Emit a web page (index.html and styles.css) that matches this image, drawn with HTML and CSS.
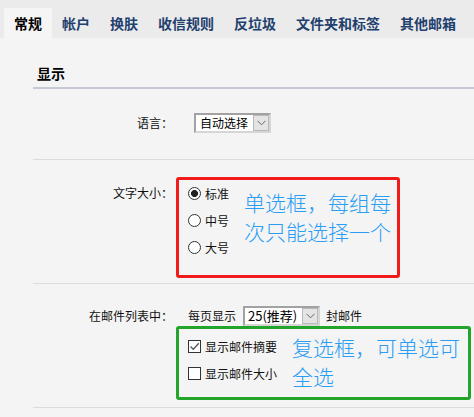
FILE: index.html
```html
<!DOCTYPE html>
<html lang="zh-CN">
<head>
<meta charset="utf-8">
<title>设置</title>
<link rel="stylesheet" href="styles.css">
</head>
<body>
<div class="tabs">
  <span class="tab active">常规</span>
  <span class="tab">帐户</span>
  <span class="tab">换肤</span>
  <span class="tab">收信规则</span>
  <span class="tab">反垃圾</span>
  <span class="tab">文件夹和标签</span>
  <span class="tab">其他邮箱</span>
</div>
<div class="content">
  <div class="section-title">显示</div>

  <div class="row row-lang">
    <div class="label">语言：</div>
    <div class="ctrl">
      <span class="select sel-lang">
        <span class="sel-text">自动选择</span>
        <span class="sel-arrow"><svg width="9" height="6" viewBox="0 0 9 6"><path d="M0.5 0.8 L4.5 4.8 L8.5 0.8" fill="none" stroke="#666" stroke-width="1"/></svg></span>
      </span>
    </div>
  </div>

  <div class="row row-size">
    <div class="label">文字大小：</div>
    <div class="ctrl">
      <div class="note-box red">
        <div class="options">
          <label class="opt"><input class="radio" type="radio" name="size" checked>标准</label>
          <label class="opt"><input class="radio" type="radio" name="size">中号</label>
          <label class="opt"><input class="radio" type="radio" name="size">大号</label>
        </div>
        <div class="note">单选框，每组每<br>次只能选择一个</div>
      </div>
    </div>
  </div>

  <div class="row row-list">
    <div class="label">在邮件列表中：</div>
    <div class="ctrl">
      <div class="per-page">
        <span>每页显示</span>
        <span class="select sel-count">
          <span class="sel-text">25(推荐)</span>
          <span class="sel-arrow"><svg width="9" height="6" viewBox="0 0 9 6"><path d="M0.5 0.8 L4.5 4.8 L8.5 0.8" fill="none" stroke="#666" stroke-width="1"/></svg></span>
        </span>
        <span>封邮件</span>
      </div>
      <div class="note-box green">
        <div class="options opts-check">
          <label class="opt"><span class="check on"><svg width="11" height="11" viewBox="0 0 11 11"><path d="M1.5 5.5 L4.3 8.3 L9.8 2.3" fill="none" stroke="#555" stroke-width="1.3"/></svg></span>显示邮件摘要</label>
          <label class="opt"><span class="check"></span>显示邮件大小</label>
        </div>
        <div class="note note-green">复选框，可单选可<br>全选</div>
      </div>
    </div>
  </div>
</div>
</body>
</html>
```
FILE: styles.css
```css
* { box-sizing: border-box; }

body {
  margin: 0;
  background: #f4f4f4;
  font-family: "Noto Sans CJK SC", "Noto Sans", sans-serif;
  font-size: 12px;
  color: #111;
}

.tabs {
  height: 38px;
  background: #ebebeb;
  display: flex;
  align-items: flex-end;
  padding-left: 4px;
}

.tab {
  height: 30px;
  line-height: 30px;
  padding: 0 10px;
  font-size: 14px;
  font-weight: bold;
  color: #223f6e;
  white-space: nowrap;
}

.tab.active {
  background: #f5f5f5;
  color: #000;
}

.content {
  padding-left: 33px;
}

.section-title {
  padding: 25px 0 4px 4px;
  line-height: 20px;
  font-size: 14px;
  font-weight: bold;
  color: #000;
  border-bottom: 2px solid #c6cad4;
}

.row {
  display: grid;
  grid-template-columns: 143px 1fr;
  border-bottom: 1px solid #dcdcdc;
}

.label {
  text-align: right;
  padding-right: 3px;
  line-height: 20px;
  white-space: nowrap;
  color: #111;
}

.row-lang { padding: 24px 0 26px; }
.row-size { padding: 17px 0 5px; }
.row-size .label { margin-top: 6px; }
.row-list { padding: 21px 0 7px; }
.row-list .label { margin-top: 1px; }

.select {
  display: inline-flex;
  align-items: center;
  height: 20px;
  background: #fff;
  border-style: solid;
  border-width: 2px;
  border-color: #a2a2a2 #d6d6d6 #d6d6d6 #a2a2a2;
}

.sel-text {
  line-height: 16px;
  white-space: nowrap;
  color: #000;
}

.sel-arrow {
  margin-left: auto;
  width: 16px;
  height: 16px;
  background: #e4e4e4;
  border: 1px solid #b9b9b9;
  display: flex;
  align-items: center;
  justify-content: center;
}

.sel-lang {
  width: 77px;
  margin-left: 18px;
}
.sel-lang .sel-text { padding-left: 4px; }

.sel-count {
  width: 77px;
  margin: 0 6px 0 7px;
}
.sel-count .sel-text { padding-left: 3px; font-size: 13px; }

.note-box {
  display: flex;
  align-items: flex-start;
  border: 3px solid;
  border-radius: 3px;
  padding-left: 9px;
}

.red {
  width: 224px;
  height: 101px;
  border-color: #f21b1b;
}

.green {
  width: 295px;
  height: 74px;
  border-color: #23a52b;
}

.options {
  display: flex;
  flex-direction: column;
}

.opts-check { padding-top: 4px; }

.opt {
  display: flex;
  align-items: center;
  height: 27px;
  white-space: nowrap;
  color: #111;
}

.radio {
  appearance: none;
  -webkit-appearance: none;
  width: 13px;
  height: 13px;
  margin: 0 4px 0 0;
  border: 1px solid #333;
  border-radius: 50%;
  background: #fff;
  display: inline-flex;
  align-items: center;
  justify-content: center;
}

.radio:checked {
  background: radial-gradient(circle, #222 0 3.2px, #fff 3.8px);
}

.check {
  width: 13px;
  height: 13px;
  margin-right: 4px;
  border: 1px solid #333;
  background: #fff;
  display: inline-flex;
  align-items: center;
  justify-content: center;
}

.note {
  margin: 8px 0 0 15px;
  font-size: 21px;
  font-weight: 300;
  line-height: 29px;
  color: #2a9df5;
  white-space: nowrap;
}

.note-green { margin-top: 4px; }

.per-page {
  display: flex;
  align-items: center;
  height: 21px;
  padding-left: 12px;
  white-space: nowrap;
}
```
